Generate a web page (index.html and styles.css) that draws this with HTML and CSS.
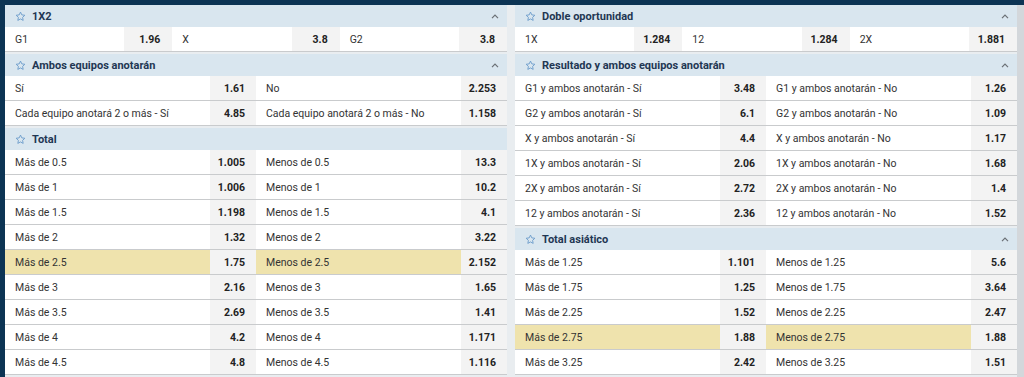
FILE: index.html
```html
<!DOCTYPE html>
<html lang="es">
<head>
<meta charset="utf-8">
<title>Mercados</title>
<link rel="stylesheet" href="styles.css">
</head>
<body>
<div class="page">
  <div class="cols">
    <div class="col">
      <section class="market">
        <div class="mhead"><svg class="star" viewBox="0 0 12 12"><path d="M6 1.2l1.45 3.05 3.3.4-2.45 2.3.62 3.3L6 8.65 3.08 10.25l.62-3.3-2.45-2.3 3.3-.4z"/></svg><span class="mtitle">1X2</span><svg class="chev" viewBox="0 0 8 5"><polyline points="1,4.2 4,1.2 7,4.2"/></svg></div>
        <div class="row three">
          <div class="pair"><span class="lbl">G1</span><span class="odd">1.96</span></div>
          <div class="pair"><span class="lbl">X</span><span class="odd">3.8</span></div>
          <div class="pair"><span class="lbl">G2</span><span class="odd">3.8</span></div>
        </div>
      </section>
      <section class="market">
        <div class="mhead"><svg class="star" viewBox="0 0 12 12"><path d="M6 1.2l1.45 3.05 3.3.4-2.45 2.3.62 3.3L6 8.65 3.08 10.25l.62-3.3-2.45-2.3 3.3-.4z"/></svg><span class="mtitle">Ambos equipos anotarán</span><svg class="chev" viewBox="0 0 8 5"><polyline points="1,4.2 4,1.2 7,4.2"/></svg></div>
        <div class="row"><div class="pair"><span class="lbl">Sí</span><span class="odd">1.61</span></div><div class="pair"><span class="lbl">No</span><span class="odd">2.253</span></div></div>
        <div class="row"><div class="pair"><span class="lbl">Cada equipo anotará 2 o más - Sí</span><span class="odd">4.85</span></div><div class="pair"><span class="lbl">Cada equipo anotará 2 o más - No</span><span class="odd">1.158</span></div></div>
      </section>
      <section class="market">
        <div class="mhead"><svg class="star" viewBox="0 0 12 12"><path d="M6 1.2l1.45 3.05 3.3.4-2.45 2.3.62 3.3L6 8.65 3.08 10.25l.62-3.3-2.45-2.3 3.3-.4z"/></svg><span class="mtitle">Total</span></div>
        <div class="row"><div class="pair"><span class="lbl">Más de 0.5</span><span class="odd">1.005</span></div><div class="pair"><span class="lbl">Menos de 0.5</span><span class="odd">13.3</span></div></div>
        <div class="row"><div class="pair"><span class="lbl">Más de 1</span><span class="odd">1.006</span></div><div class="pair"><span class="lbl">Menos de 1</span><span class="odd">10.2</span></div></div>
        <div class="row"><div class="pair"><span class="lbl">Más de 1.5</span><span class="odd">1.198</span></div><div class="pair"><span class="lbl">Menos de 1.5</span><span class="odd">4.1</span></div></div>
        <div class="row"><div class="pair"><span class="lbl">Más de 2</span><span class="odd">1.32</span></div><div class="pair"><span class="lbl">Menos de 2</span><span class="odd">3.22</span></div></div>
        <div class="row hl"><div class="pair"><span class="lbl">Más de 2.5</span><span class="odd">1.75</span></div><div class="pair"><span class="lbl">Menos de 2.5</span><span class="odd">2.152</span></div></div>
        <div class="row"><div class="pair"><span class="lbl">Más de 3</span><span class="odd">2.16</span></div><div class="pair"><span class="lbl">Menos de 3</span><span class="odd">1.65</span></div></div>
        <div class="row"><div class="pair"><span class="lbl">Más de 3.5</span><span class="odd">2.69</span></div><div class="pair"><span class="lbl">Menos de 3.5</span><span class="odd">1.41</span></div></div>
        <div class="row"><div class="pair"><span class="lbl">Más de 4</span><span class="odd">4.2</span></div><div class="pair"><span class="lbl">Menos de 4</span><span class="odd">1.171</span></div></div>
        <div class="row"><div class="pair"><span class="lbl">Más de 4.5</span><span class="odd">4.8</span></div><div class="pair"><span class="lbl">Menos de 4.5</span><span class="odd">1.116</span></div></div>
      </section>
    </div>
    <div class="col">
      <section class="market">
        <div class="mhead"><svg class="star" viewBox="0 0 12 12"><path d="M6 1.2l1.45 3.05 3.3.4-2.45 2.3.62 3.3L6 8.65 3.08 10.25l.62-3.3-2.45-2.3 3.3-.4z"/></svg><span class="mtitle">Doble oportunidad</span><svg class="chev" viewBox="0 0 8 5"><polyline points="1,4.2 4,1.2 7,4.2"/></svg></div>
        <div class="row three">
          <div class="pair"><span class="lbl">1X</span><span class="odd">1.284</span></div>
          <div class="pair"><span class="lbl">12</span><span class="odd">1.284</span></div>
          <div class="pair"><span class="lbl">2X</span><span class="odd">1.881</span></div>
        </div>
      </section>
      <section class="market">
        <div class="mhead"><svg class="star" viewBox="0 0 12 12"><path d="M6 1.2l1.45 3.05 3.3.4-2.45 2.3.62 3.3L6 8.65 3.08 10.25l.62-3.3-2.45-2.3 3.3-.4z"/></svg><span class="mtitle">Resultado y ambos equipos anotarán</span><svg class="chev" viewBox="0 0 8 5"><polyline points="1,4.2 4,1.2 7,4.2"/></svg></div>
        <div class="row"><div class="pair"><span class="lbl">G1 y ambos anotarán - Sí</span><span class="odd">3.48</span></div><div class="pair"><span class="lbl">G1 y ambos anotarán - No</span><span class="odd">1.26</span></div></div>
        <div class="row"><div class="pair"><span class="lbl">G2 y ambos anotarán - Sí</span><span class="odd">6.1</span></div><div class="pair"><span class="lbl">G2 y ambos anotarán - No</span><span class="odd">1.09</span></div></div>
        <div class="row"><div class="pair"><span class="lbl">X y ambos anotarán - Sí</span><span class="odd">4.4</span></div><div class="pair"><span class="lbl">X y ambos anotarán - No</span><span class="odd">1.17</span></div></div>
        <div class="row"><div class="pair"><span class="lbl">1X y ambos anotarán - Sí</span><span class="odd">2.06</span></div><div class="pair"><span class="lbl">1X y ambos anotarán - No</span><span class="odd">1.68</span></div></div>
        <div class="row"><div class="pair"><span class="lbl">2X y ambos anotarán - Sí</span><span class="odd">2.72</span></div><div class="pair"><span class="lbl">2X y ambos anotarán - No</span><span class="odd">1.4</span></div></div>
        <div class="row"><div class="pair"><span class="lbl">12 y ambos anotarán - Sí</span><span class="odd">2.36</span></div><div class="pair"><span class="lbl">12 y ambos anotarán - No</span><span class="odd">1.52</span></div></div>
      </section>
      <section class="market">
        <div class="mhead"><svg class="star" viewBox="0 0 12 12"><path d="M6 1.2l1.45 3.05 3.3.4-2.45 2.3.62 3.3L6 8.65 3.08 10.25l.62-3.3-2.45-2.3 3.3-.4z"/></svg><span class="mtitle">Total asiático</span><svg class="chev" viewBox="0 0 8 5"><polyline points="1,4.2 4,1.2 7,4.2"/></svg></div>
        <div class="row"><div class="pair"><span class="lbl">Más de 1.25</span><span class="odd">1.101</span></div><div class="pair"><span class="lbl">Menos de 1.25</span><span class="odd">5.6</span></div></div>
        <div class="row"><div class="pair"><span class="lbl">Más de 1.75</span><span class="odd">1.25</span></div><div class="pair"><span class="lbl">Menos de 1.75</span><span class="odd">3.64</span></div></div>
        <div class="row"><div class="pair"><span class="lbl">Más de 2.25</span><span class="odd">1.52</span></div><div class="pair"><span class="lbl">Menos de 2.25</span><span class="odd">2.47</span></div></div>
        <div class="row hl"><div class="pair"><span class="lbl">Más de 2.75</span><span class="odd">1.88</span></div><div class="pair"><span class="lbl">Menos de 2.75</span><span class="odd">1.88</span></div></div>
        <div class="row"><div class="pair"><span class="lbl">Más de 3.25</span><span class="odd">2.42</span></div><div class="pair"><span class="lbl">Menos de 3.25</span><span class="odd">1.51</span></div></div>
      </section>
    </div>
  </div>
</div>
</body>
</html>
```

FILE: styles.css
```css
* { box-sizing: border-box; }
html, body { margin: 0; padding: 0; }
body {
  background: #0c3454;
  font-family: Roboto, "Liberation Sans", Arial, sans-serif;
  font-size: 10.5px;
  color: #333;
  overflow: hidden;
}
.page {
  margin: 5px 0 0 5px;
  height: 372px;
  background: #d3d7db;
  padding-right: 7px;
}
.cols {
  display: grid;
  grid-template-columns: 1fr 1fr;
  column-gap: 8px;
  height: 100%;
  background: #e9edf0;
}
.col {
  display: flex;
  flex-direction: column;
  gap: 2px;
}
.market { display: flex; flex-direction: column; }
.mhead {
  height: 22px;
  background: #d9e6ef;
  display: flex;
  align-items: center;
  padding: 0 8px 0 10px;
}
.star {
  width: 11px;
  height: 11px;
  fill: none;
  stroke: #6b9bcb;
  stroke-width: 1;
  stroke-linejoin: round;
  margin-right: 6px;
}
.mtitle {
  font-weight: 700;
  color: #1f3753;
  font-size: 11px;
  flex: 1;
}
.chev {
  width: 8px;
  height: 5px;
  fill: none;
  stroke: #6a6f75;
  stroke-width: 1.2;
}
.row {
  display: flex;
  height: 25px;
  background: #fff;
  border-bottom: 1px solid #c9cbcd;
}
.pair {
  flex: 1;
  display: flex;
  min-width: 0;
}
.lbl {
  flex: 1;
  display: flex;
  align-items: center;
  padding-left: 10px;
  white-space: nowrap;
  color: #333;
}
.odd {
  width: 46px;
  display: flex;
  align-items: center;
  justify-content: flex-end;
  padding-right: 11px;
  background: #f3f3f3;
  font-weight: 700;
  color: #222;
}
.three .odd { width: 48px; padding-right: 12px; }
.hl .lbl { background: #efe3ad; }
```
